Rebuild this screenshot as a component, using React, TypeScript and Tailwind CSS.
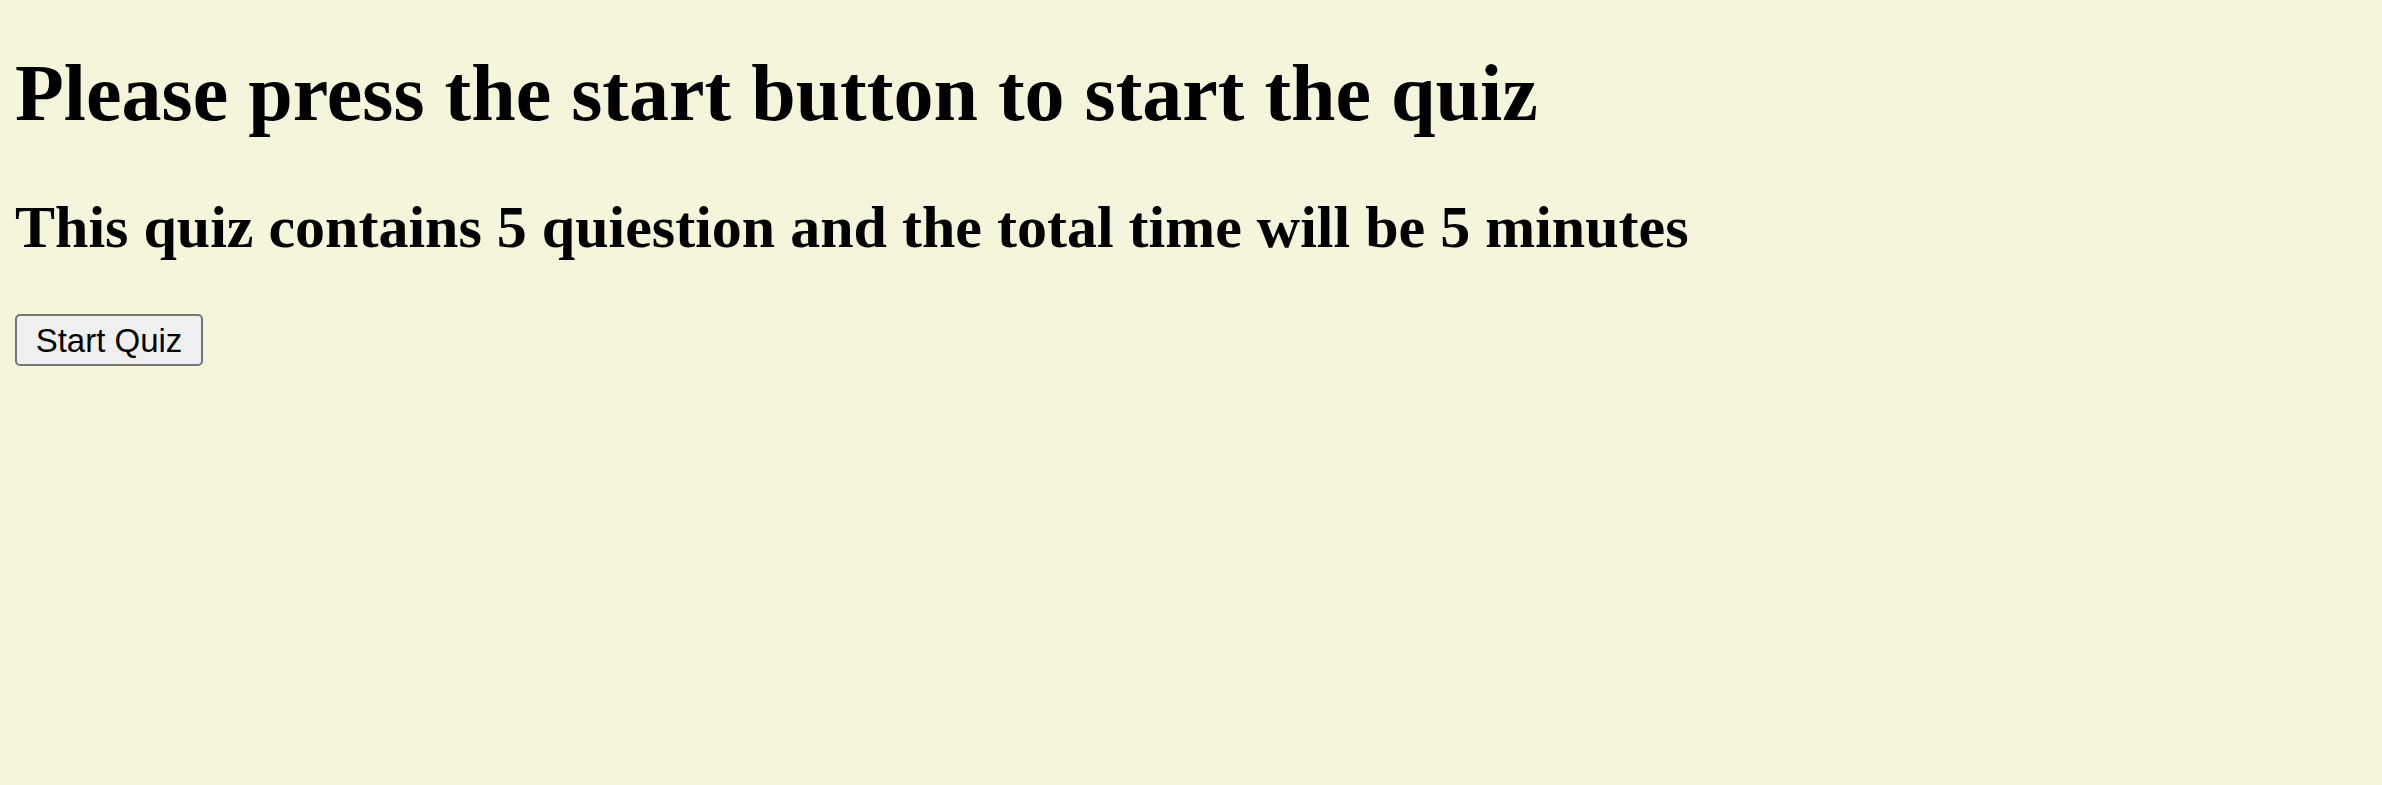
import React from "react";

export default function App() {
  return (
    <div className="flex min-h-[785px] w-full flex-col items-start bg-[#f5f5dc] pl-[15px] pt-[47px] text-black">
      <h1 className="m-0 whitespace-nowrap font-['Liberation_Serif','Times_New_Roman',serif] text-[80px] font-bold leading-[92px]">
        Please press the start button to start the quiz
      </h1>
      <h2 className="mt-[54px] whitespace-nowrap font-['Liberation_Serif','Times_New_Roman',serif] text-[60px] font-bold leading-[69px]">
        This quiz contains 5 quiestion and the total time will be 5 minutes
      </h2>
      <button className="mt-[52px] flex h-[52px] w-[188px] items-center justify-center rounded-[5px] border-2 border-[#767676] bg-[#efefef] font-['Liberation_Sans',Arial,sans-serif] text-[33px] leading-none text-black">
        Start Quiz
      </button>
    </div>
  );
}
